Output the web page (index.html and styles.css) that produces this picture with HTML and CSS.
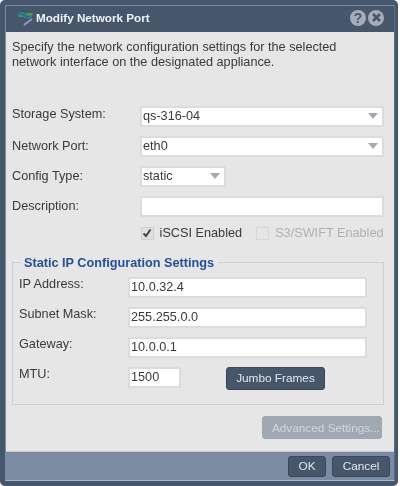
FILE: index.html
```html
<!DOCTYPE html>
<html lang="en">
<head>
<meta charset="utf-8">
<title>Modify Network Port</title>
<link rel="stylesheet" href="styles.css">
</head>
<body>
<div class="window">
  <div class="frame">
    <header class="titlebar">
      <svg class="logo" width="17" height="14" viewBox="0 0 17 14" aria-hidden="true">
        <path d="M0 1 L6 0 L10 3 L16 1 L15 5 L11 7 L6 5 L1 5 Z" fill="#2f8f78"/>
        <path d="M0 2 L5 2 L10 5 L16 2" fill="none" stroke="#2a5f9e" stroke-width="1.2"/>
        <path d="M9 1 L16 1 L15 4 L10 3 Z" fill="#4f9a45"/>
        <path d="M7 13 L15 7" stroke="#9c8fd0" stroke-width="2" fill="none"/>
      </svg>
      <h1 class="title">Modify Network Port</h1>
      <div class="tools">
        <span class="tool">?</span>
        <span class="tool">
          <svg width="11" height="11" viewBox="0 0 11 11" aria-hidden="true"><path d="M2 2 L9 9 M9 2 L2 9" stroke="#46566b" stroke-width="2.6"/></svg>
        </span>
      </div>
    </header>
    <main class="content">
      <p class="intro">Specify the network configuration settings for the selected network interface on the designated appliance.</p>
      <div class="rows">
        <div class="row"><label class="label">Storage System:</label><div class="field grow"><span>qs-316-04</span><i class="arrow"></i></div></div>
        <div class="row"><label class="label">Network Port:</label><div class="field grow"><span>eth0</span><i class="arrow"></i></div></div>
        <div class="row"><label class="label">Config Type:</label><div class="field short"><span>static</span><i class="arrow"></i></div></div>
        <div class="row"><label class="label">Description:</label><div class="field grow"></div></div>
      </div>
      <div class="checks">
        <span class="check"><i class="box"><svg width="10" height="10" viewBox="0 0 10 10" aria-hidden="true"><path d="M1.5 5.5 L4 8 L8.5 1.5" fill="none" stroke="#444" stroke-width="2"/></svg></i>iSCSI Enabled</span>
        <span class="check off"><i class="box"></i>S3/SWIFT Enabled</span>
      </div>
      <fieldset class="group">
        <legend class="legend">Static IP Configuration Settings</legend>
        <div class="row"><label class="label">IP Address:</label><div class="field grow"><span>10.0.32.4</span></div></div>
        <div class="row"><label class="label">Subnet Mask:</label><div class="field grow"><span>255.255.0.0</span></div></div>
        <div class="row"><label class="label">Gateway:</label><div class="field grow"><span>10.0.0.1</span></div></div>
        <div class="row"><label class="label">MTU:</label><div class="field mtu"><span>1500</span></div><button class="btn jumbo">Jumbo Frames</button></div>
      </fieldset>
      <div class="advanced"><button class="btn disabled">Advanced Settings...</button></div>
    </main>
    <footer class="footer">
      <button class="btn ok">OK</button>
      <button class="btn cancel">Cancel</button>
    </footer>
  </div>
</div>
</body>
</html>
```
FILE: styles.css
```css
html, body { margin: 0; padding: 0; background: #fff; }
body { width: 400px; height: 486px; overflow: hidden; font-family: "Liberation Sans", Arial, sans-serif; font-size: 12.7px; color: #3a3a3a; }
.window { width: 398px; height: 486px; box-sizing: border-box; padding: 5px 3px 5px 5px; background: #46566b; border-radius: 5px; filter: blur(0.35px); }
.frame { height: 100%; box-sizing: border-box; border: 1px solid #7a8da5; border-bottom-color: #a9b7c8; border-right-color: #5c6d83; display: flex; flex-direction: column; }
.titlebar { height: 26px; box-sizing: border-box; flex: none; display: flex; align-items: center; padding: 0 10px 3px 11px; background: #46566b; }
.logo { flex: none; margin: 3px 2px 0 0; }
.title { margin: 0; font-size: 11.7px; font-weight: bold; color: #f0f2f5; flex: 1; }
.tools { display: flex; gap: 2px; }
.tool { width: 16px; height: 16px; border-radius: 50%; background: #a4adb9; color: #46566b; font-size: 14px; font-weight: bold; display: flex; align-items: center; justify-content: center; }
.content { flex: 1; background: #e6e6e6; padding: 8px 10.5px 0 6px; display: flex; flex-direction: column; min-height: 0; }
.intro { margin: 0; line-height: 15px; height: 64px; padding-right: 30px; }
.rows { display: flex; flex-direction: column; gap: 6px; }
.row { display: flex; align-items: center; height: 24px; }
.rows .label { width: 128px; }
.rows .row:first-child .label { padding-bottom: 5px; }
.label { flex: none; }
.field { height: 21px; box-sizing: border-box; border: 2px solid #dcdcdc; background: #fff; display: flex; align-items: center; padding-left: 1px; }
.grow { flex: 1; }
.short { width: 86px; flex: none; }
.mtu { width: 53px; flex: none; }
.field span { flex: 1; }
.arrow { flex: none; width: 0; height: 0; margin-right: 4px; border-left: 5px solid transparent; border-right: 5px solid transparent; border-top: 6px solid #a3aab5; }
.checks { display: flex; align-items: center; justify-content: flex-end; gap: 14px; height: 22px; margin-top: 4px; }
.check { display: flex; align-items: center; }
.check.off { color: #b0b0b0; }
.box { width: 11px; height: 11px; border: 1px solid #cfcfcf; background: #e0e0e0; margin-right: 6px; display: flex; align-items: center; justify-content: center; }
.check.off .box { background: #e6e6e6; border-color: #d6d6d6; }
.group { margin: 10px 0 0; height: 151px; box-sizing: border-box; border: 1px solid #cdd0dc; padding: 5px 16px 0 6px; display: flex; flex-direction: column; gap: 6px; min-width: 0; }
.legend { margin-left: 2px; padding: 2px 4px 0 3px; font-size: 12.7px; font-weight: bold; color: #26509b; line-height: 14px; }
.group .label { width: 109px; padding-bottom: 6px; }
.btn { font-family: inherit; font-size: 11.8px; border: 1px solid #3a485a; border-radius: 3px; background: #46566b; color: #e4e7ea; padding: 0; height: 23px; }
.jumbo { width: 99px; margin-left: 45px; margin-top: 2px; }
.advanced { display: flex; justify-content: flex-end; padding: 11px 2px 0 0; }
.disabled { width: 120px; padding-left: 9px; white-space: nowrap; overflow: hidden; background: #a0a8b2; border-color: #a0a8b2; color: #d3d6da; }
.footer { height: 28px; flex: none; display: flex; justify-content: flex-end; align-items: center; gap: 6px; padding-right: 4px; background: #7a8ba2; border-top: 1px solid #c6ccd4; }
.ok { width: 38px; height: 21px; }
.cancel { width: 58px; height: 21px; }
```
